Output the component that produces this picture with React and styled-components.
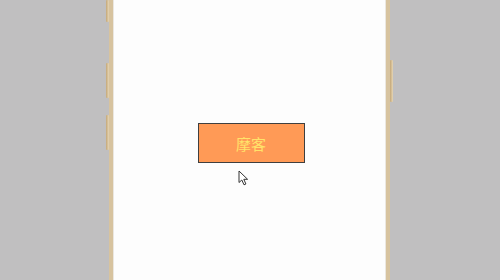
import styled, { createGlobalStyle } from 'styled-components';

const GlobalStyle = createGlobalStyle`
  html, body {
    margin: 0;
    padding: 0;
    height: 100%;
    background: #c0bfc0;
    font-family: "Noto Sans CJK SC", "Noto Sans", sans-serif;
  }
  #root { height: 100%; }
`;

const App = () => {
  return (
    <>
      <GlobalStyle />
      <Stage>
        <Phone>
          <SideKey $side="left" $top={0} $height={22} />
          <SideKey $side="left" $top={63} $height={35} />
          <SideKey $side="left" $top={115} $height={35} />
          <SideKey $side="right" $top={60} $height={42} />
          <Screen>
            <BrandButton>摩客</BrandButton>
            <Cursor width="12" height="16" viewBox="0 0 12 16">
              <path d="M1 1 L1 12.5 L3.8 10 L6 14.8 L7.9 14 L5.8 9.3 L9.6 9.3 Z" fill="#fff" stroke="#333" strokeWidth="1" strokeLinejoin="round" />
            </Cursor>
          </Screen>
        </Phone>
      </Stage>
    </>
  );
};

export default App;

const Stage = styled.div`
  height: 280px;
  width: 500px;
  display: flex;
  justify-content: center;
  overflow: hidden;
`;

const Phone = styled.div`
  position: relative;
  margin-left: -2px;
  width: 281px;
  height: 320px;
  margin-top: -20px;
  box-sizing: border-box;
  border-left: 4px solid #d7c39f;
  border-right: 4px solid #d7c39f;
  background: #d7c39f;
`;

const SideKey = styled.div`
  position: absolute;
  top: ${p => p.$top + 20}px;
  ${p => (p.$side === 'left' ? 'left: -7px;' : 'right: -7px;')}
  width: 3px;
  height: ${p => p.$height}px;
  background: linear-gradient(90deg, #c4a777, #e6d6b6);
  border-radius: 1px;
`;

const Screen = styled.div`
  position: relative;
  height: 100%;
  background: #fdfdfd;
  border-left: 1px solid #ebe7e0;
  border-right: 1px solid #ebe7e0;
  display: flex;
  flex-direction: column;
  align-items: center;
  padding-top: 143px;
  box-sizing: border-box;
`;

const BrandButton = styled.button`
  width: 107px;
  height: 40px;
  margin-left: 4px;
  background: #ff9a56;
  border: 1.5px solid #3f3f3f;
  color: #ffe36a;
  font-family: "Noto Sans CJK SC", "Noto Sans", sans-serif;
  font-size: 15px;
  padding: 0;
  cursor: pointer;
`;

const Cursor = styled.svg`
  position: absolute;
  left: 124px;
  top: 190px;
`;
